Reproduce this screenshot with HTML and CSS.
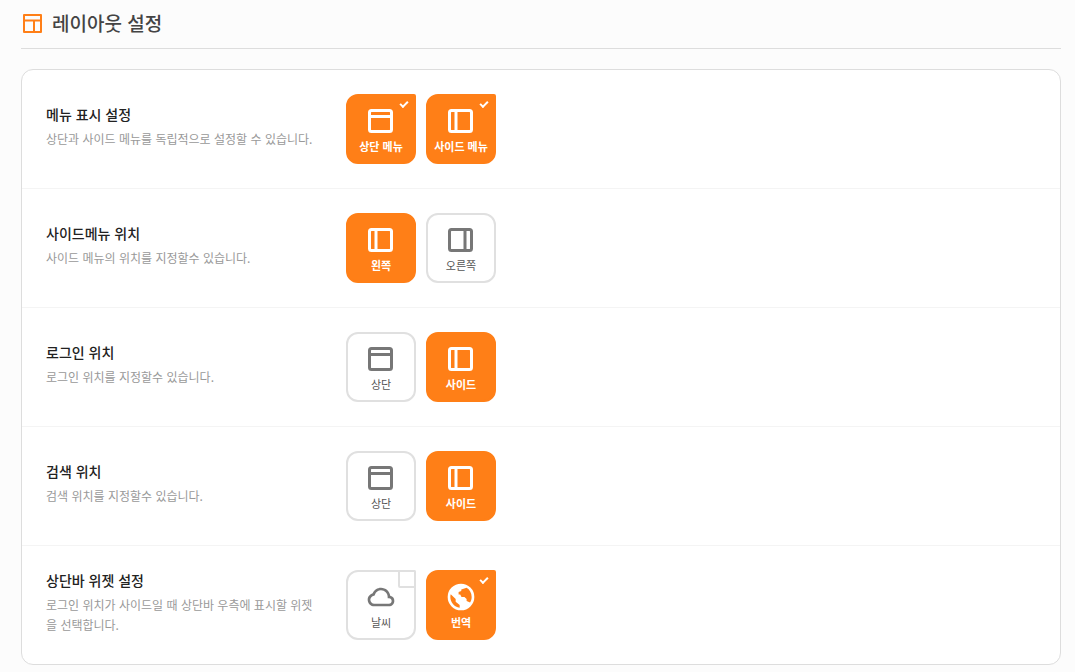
FILE: index.html
```html
<!DOCTYPE html>
<html lang="ko">
<head>
<meta charset="utf-8">
<meta name="viewport" content="width=device-width, initial-scale=1">
<title>레이아웃 설정</title>
<link rel="stylesheet" href="styles.css">
</head>
<body>
<svg class="sprite" aria-hidden="true">
  <symbol id="i-top" viewBox="0 0 32 32"><rect x="4.500" y="5.500" width="22" height="21" rx="2" fill="none" stroke="currentColor" stroke-width="3"/><path d="M4 11.500h23" fill="none" stroke="currentColor" stroke-width="3"/></symbol>
  <symbol id="i-left" viewBox="0 0 32 32"><rect x="4.500" y="5.500" width="22" height="21" rx="2" fill="none" stroke="currentColor" stroke-width="3"/><path d="M11 5v22" fill="none" stroke="currentColor" stroke-width="3"/></symbol>
  <symbol id="i-right" viewBox="0 0 32 32"><rect x="4.500" y="5.500" width="22" height="21" rx="2" fill="none" stroke="currentColor" stroke-width="3"/><path d="M20 5v22" fill="none" stroke="currentColor" stroke-width="3"/></symbol>
  <symbol id="i-cloud" viewBox="0 0 24 24"><path fill="currentColor" d="M18.944 11.112C18.507 7.67 15.56 5 12 5 9.244 5 6.85 6.611 5.757 9.15 3.609 9.792 2 11.82 2 14c0 2.757 2.243 5 5 5h11c2.206 0 4-1.794 4-4a4.01 4.01 0 0 0-3.056-3.888zM18 17H7c-1.654 0-3-1.346-3-3 0-1.404 1.199-2.756 2.673-3.015l.581-.102.192-.558C8.149 8.274 9.895 7 12 7c2.757 0 5 2.243 5 5v1h1c1.103 0 2 .897 2 2s-.897 2-2 2z"/></symbol>
  <symbol id="i-globe" viewBox="0 0 24 24"><path fill="currentColor" fill-rule="evenodd" d="M12 2a10 10 0 1 0 0 20 10 10 0 0 0 0-20zM4.300 10L8 13.500v2l3 2.500v2C7 19.500 4 16 4 12c0-.700.100-1.400.300-2zM10.200 10.200v-2l2-.700V6.300l4-1.200c2.200 1.300 3.800 3.900 3.800 6.900 0 1.600-.400 2.900-1.200 4.200l-2.600-1.200v-1.500l-1.600-1.500h-2.200l-1-1.800z"/></symbol>
</svg>
<main class="page">
  <header class="page-header">
    <svg class="page-icon" viewBox="0 0 24 24" aria-hidden="true"><path d="M3 4h17v17H3zM3 9.500h17M13 9.500v11.500" fill="none" stroke="currentColor" stroke-width="2" stroke-linejoin="round"/></svg>
    <h1 class="page-title">레이아웃 설정</h1>
  </header>
  <form class="card">
    <fieldset class="row" aria-labelledby="t1">
      <div class="info"><h2 class="info-title" id="t1">메뉴 표시 설정</h2><p class="info-desc">상단과 사이드 메뉴를 독립적으로 설정할 수 있습니다.</p></div>
      <div class="options">
        <label class="tile tile-check"><input class="check" type="checkbox" checked><svg class="icon"><use href="#i-top"/></svg><span>상단 메뉴</span></label>
        <label class="tile tile-check"><input class="check" type="checkbox" checked><svg class="icon"><use href="#i-left"/></svg><span>사이드 메뉴</span></label>
      </div>
    </fieldset>
    <fieldset class="row" aria-labelledby="t2">
      <div class="info"><h2 class="info-title" id="t2">사이드메뉴 위치</h2><p class="info-desc">사이드 메뉴의 위치를 지정할수 있습니다.</p></div>
      <div class="options">
        <label class="tile"><input class="radio" type="radio" name="side" checked><svg class="icon"><use href="#i-left"/></svg><span>왼쪽</span></label>
        <label class="tile"><input class="radio" type="radio" name="side"><svg class="icon"><use href="#i-right"/></svg><span>오른쪽</span></label>
      </div>
    </fieldset>
    <fieldset class="row" aria-labelledby="t3">
      <div class="info"><h2 class="info-title" id="t3">로그인 위치</h2><p class="info-desc">로그인 위치를 지정할수 있습니다.</p></div>
      <div class="options">
        <label class="tile"><input class="radio" type="radio" name="login"><svg class="icon"><use href="#i-top"/></svg><span>상단</span></label>
        <label class="tile"><input class="radio" type="radio" name="login" checked><svg class="icon"><use href="#i-left"/></svg><span>사이드</span></label>
      </div>
    </fieldset>
    <fieldset class="row" aria-labelledby="t4">
      <div class="info"><h2 class="info-title" id="t4">검색 위치</h2><p class="info-desc">검색 위치를 지정할수 있습니다.</p></div>
      <div class="options">
        <label class="tile"><input class="radio" type="radio" name="search"><svg class="icon"><use href="#i-top"/></svg><span>상단</span></label>
        <label class="tile"><input class="radio" type="radio" name="search" checked><svg class="icon"><use href="#i-left"/></svg><span>사이드</span></label>
      </div>
    </fieldset>
    <fieldset class="row" aria-labelledby="t5">
      <div class="info"><h2 class="info-title" id="t5">상단바 위젯 설정</h2><p class="info-desc">로그인 위치가 사이드일 때 상단바 우측에 표시할 위젯을 선택합니다.</p></div>
      <div class="options">
        <label class="tile tile-check"><input class="check" type="checkbox"><svg class="icon"><use href="#i-cloud"/></svg><span>날씨</span></label>
        <label class="tile tile-check"><input class="check" type="checkbox" checked><svg class="icon"><use href="#i-globe"/></svg><span>번역</span></label>
      </div>
    </fieldset>
  </form>
</main>
</body>
</html>
```
FILE: styles.css
```css
* { box-sizing: border-box; }
body {
  margin: 0;
  background: #fcfcfc;
  color: #222;
  font-family: "Noto Sans CJK KR", sans-serif;
}
.sprite { display: none; }
.page { padding: 0 14px 7px 21px; }
.page-header {
  display: flex;
  align-items: center;
  gap: 7px;
  height: 49px;
  margin-bottom: 20px;
  padding-bottom: 2px;
  border-bottom: 1px solid #ddd;
}
.page-icon { width: 24px; height: 24px; color: #ff7f17; }
.page-title { margin: 0; font-size: 19px; line-height: 28px; font-weight: 500; color: #444; }
.card {
  overflow: hidden;
  background: #fff;
  border: 1px solid #ddd;
  border-radius: 12px;
}
.row {
  display: grid;
  grid-template-columns: 270px 1fr;
  gap: 30px;
  align-items: center;
  min-width: 0;
  margin: 0;
  padding: 24px;
  border: 0;
}
.row + .row { border-top: 1px solid #f4f4f4; }
.info { padding-bottom: 5px; }
.info-title { margin: 0 0 5px; font-size: 14px; line-height: 20px; font-weight: 500; }
.info-desc { margin: 0; font-size: 12px; line-height: 20px; color: #999; word-break: break-all; }
.options { display: flex; gap: 10px; }
.tile {
  position: relative;
  display: flex;
  flex-direction: column;
  align-items: center;
  justify-content: center;
  width: 70px;
  height: 70px;
  padding-top: 2px;
  border: 2px solid #e0e0e0;
  border-radius: 12px;
  color: #777;
  font-size: 11px;
  line-height: 18px;
  white-space: nowrap;
  cursor: pointer;
}
.tile span { color: #555; }
.tile-check { border-top-right-radius: 2px; }
.tile:has(:checked) { background: #ff7f17; border-color: #ff7f17; color: #fff; font-weight: 700; }
.tile:has(:checked) span { color: #fff; }
.icon { width: 32px; height: 32px; }
.radio { position: absolute; inset: 0; margin: 0; opacity: 0; cursor: pointer; }
.check {
  position: absolute;
  top: -2px;
  right: -2px;
  width: 18px;
  height: 18px;
  margin: 0;
  appearance: none;
  border: 2px solid #e0e0e0;
  border-radius: 2px;
  cursor: pointer;
}
.check:checked { border-color: transparent; }
.check:checked::after {
  content: "";
  position: absolute;
  top: 5px;
  left: 0;
  width: 8px;
  height: 5px;
  box-sizing: border-box;
  border: solid #fff;
  border-width: 0 0 2px 2px;
  transform: rotate(-45deg);
}
```
